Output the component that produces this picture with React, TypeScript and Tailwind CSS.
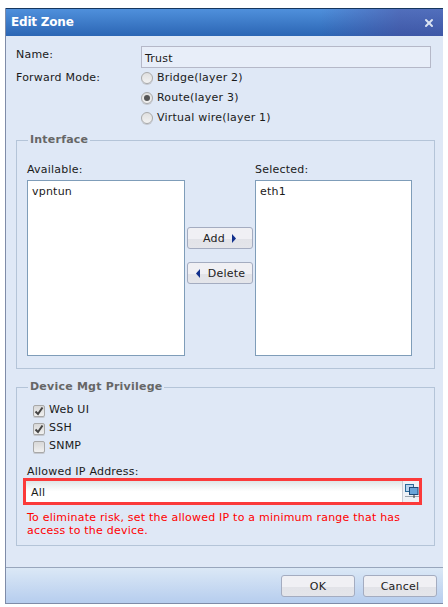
import { ReactNode } from 'react';
import { X } from 'lucide-react';

const font = { fontFamily: '"DejaVu Sans", Verdana, sans-serif' };

function Radio({ checked, label }: { checked?: boolean; label: string }) {
  return (
    <div className="flex items-center h-[20px] gap-[4px]">
      <span className="w-[12px] h-[12px] rounded-full border border-[#a9a9a9] bg-gradient-to-b from-[#e0e0e0] to-[#f2f2f2] flex items-center justify-center shadow-[0_1px_0_#c4c8d0]">
        {checked && <span className="w-[6px] h-[6px] rounded-full bg-[#555555]" />}
      </span>
      <span className="pt-px">{label}</span>
    </div>
  );
}

function Check({ checked, label }: { checked?: boolean; label: string }) {
  return (
    <div className="flex items-center h-[18px] gap-[4px]">
      <span className="w-[12px] h-[12px] rounded-[2px] border border-[#a8a8a8] bg-gradient-to-b from-[#d8d8d8] to-[#f0f0f0] flex items-center justify-center shadow-[0_1px_0_#c4c8d0]">
        {checked && (
          <svg width="10" height="10" viewBox="0 0 10 10">
            <path d="M1.5 5.5 L4 8 L8.5 1.5" fill="none" stroke="#444" strokeWidth="2" />
          </svg>
        )}
      </span>
      <span>{label}</span>
    </div>
  );
}

function Btn({ children, className }: { children: ReactNode; className: string }) {
  return (
    <button className={`h-[22px] pt-[4px] rounded-[3px] border border-[#a4acc0] bg-[linear-gradient(#f0f0f4_0,#f0f0f4_55%,#e2e3e8_55%,#e4e5ea_100%)] flex items-center justify-center text-[#222] ${className}`}>
      {children}
    </button>
  );
}

function Fieldset({ title, className, legendClass, children }: { title: string; className: string; legendClass: string; children: ReactNode }) {
  return (
    <fieldset className={`border border-[#b4c4d8] ${className}`}>
      <legend className={`px-[2px] font-bold text-[#666] ${legendClass}`}>{title}</legend>
      {children}
    </fieldset>
  );
}

export default function App() {
  return (
    <div className="w-[448px] h-[607px] bg-white pt-[8px] pl-[5px] text-[11px] text-[#1a1a1a] tracking-[0.22px]" style={font}>
      <div className="w-[438px] h-[596px] flex flex-col border-l border-b border-[#7f8ca8] bg-[#dfe8f6]">
        <div className="h-[28px] shrink-0 border-t border-[#16365e] bg-[linear-gradient(90deg,transparent_72%,rgba(84,70,150,0.45)_90%),linear-gradient(180deg,#4f90dc_0,#2c66b4_100%)] flex items-center justify-between pl-[5px] pr-[8px]">
          <span className="text-white font-bold text-[12px] tracking-[-0.2px] -mt-[1px]">Edit Zone</span>
          <X className="w-[12px] h-[12px] text-[#dbe3f2]" strokeWidth={4} />
        </div>
        <div className="flex-1 pl-[10px] pr-[9px] pt-[10px]">
          <div className="flex">
            <span className="w-[125px] -mt-[2px] pt-[3px] h-[22px]">Name:</span>
            <div className="w-[290px] h-[22px] border border-[#b5b8c8] bg-[#e8eef9] px-[3px] pt-[4px] flex items-center">Trust</div>
          </div>
          <div className="flex">
            <span className="w-[125px] pt-[2px]">Forward Mode:</span>
            <div className="flex flex-col">
              <Radio label="Bridge(layer 2)" />
              <Radio checked label="Route(layer 3)" />
              <Radio label="Virtual wire(layer 1)" />
            </div>
          </div>
          <Fieldset title="Interface" legendClass="ml-px" className="mt-[4px] w-[419px] h-[237px] px-[10px]">
            <div className="flex mt-[12px]">
              <div className="w-[158px]">
                <div className="h-[19px] pt-[1px]">Available:</div>
                <div className="h-[176px] border border-[#7f9db9] bg-white px-[4px] py-[3px]">vpntun</div>
              </div>
              <div className="w-[70px] flex flex-col items-center gap-[13px] pt-[66px]">
                <Btn className="w-[66px] gap-[6px]">
                  Add
                  <svg className="-mt-[3px]" width="6" height="9" viewBox="0 0 6 9"><path d="M1 0 L5 4.5 L1 9 Z" fill="#12308c" /></svg>
                </Btn>
                <Btn className="w-[66px] gap-[7px]">
                  <svg className="-mt-[3px]" width="6" height="9" viewBox="0 0 6 9"><path d="M5 0 L1 4.5 L5 9 Z" fill="#12308c" /></svg>
                  Delete
                </Btn>
              </div>
              <div className="w-[157px]">
                <div className="h-[19px] pt-[1px]">Selected:</div>
                <div className="h-[176px] border border-[#7f9db9] bg-white px-[4px] py-[3px]">eth1</div>
              </div>
            </div>
          </Fieldset>
          <Fieldset title="Device Mgt Privilege" legendClass="ml-[5px]" className="mt-[10px] w-[419px] h-[167px] px-[6px]">
            <div className="pl-[10px] mt-[6px]">
              <Check checked label="Web UI" />
              <Check checked label="SSH" />
              <Check label="SNMP" />
            </div>
            <div className="mt-[8px] pl-[4px] h-[14px]">Allowed IP Address:</div>
            <div className="w-[399px] h-[27px] border-[3px] border-[#fb3a3a] flex bg-white">
              <div className="flex-1 px-[5px] pt-[5px] flex items-center bg-[linear-gradient(180deg,#dfe6e6_0,#ffffff_50%)]">All</div>
              <div className="w-[17px] pl-[2px] border-l border-[#c8ccd4] bg-[#eef1f6] flex items-center justify-center">
                <svg width="14" height="15" viewBox="0 0 14 15">
                  <rect x="0.5" y="0.5" width="8" height="7" fill="#b8d4ee" stroke="#2a6a9a" />
                  <rect x="4.5" y="3.5" width="8.5" height="7" fill="#6aa4d8" stroke="#1e4a78" />
                  <path d="M0 12.5 H14" stroke="#9aa4ae" />
                  <path d="M9 11 V14" stroke="#333" />
                </svg>
              </div>
            </div>
            <p className="mt-[6px] pl-[4px] text-[#f00] leading-[13px]">
              To eliminate risk, set the allowed IP to a minimum range that has
              <br />
              access to the device.
            </p>
          </Fieldset>
        </div>
        <div className="h-[36px] shrink-0 border-t border-[#98a6bc] bg-[linear-gradient(180deg,#dbe8f6_0,#b6cdee_100%)] flex justify-end items-center gap-[8px] pr-[6px]">
          <Btn className="w-[74px]">OK</Btn>
          <Btn className="w-[74px]">Cancel</Btn>
        </div>
      </div>
    </div>
  );
}
